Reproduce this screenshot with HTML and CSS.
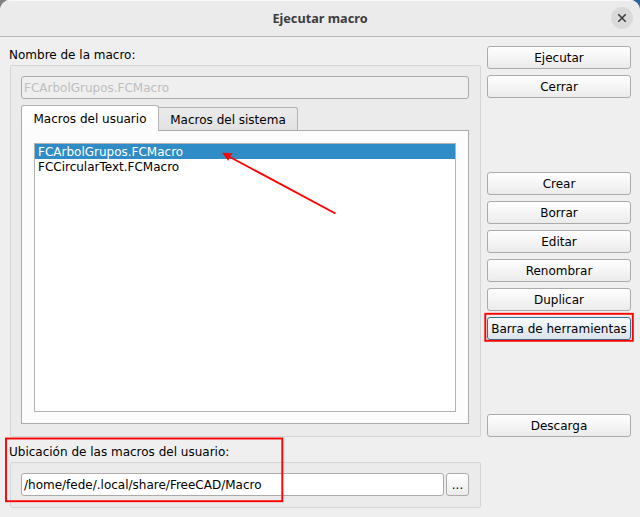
FILE: index.html
```
<!DOCTYPE html>
<html lang="es">
<head>
<meta charset="utf-8">
<title>Ejecutar macro</title>
<link rel="stylesheet" href="styles.css">
</head>
<body>
<div class="dialog">
  <header class="titlebar">
    <h1 class="title">Ejecutar macro</h1>
    <button class="close" aria-label="Cerrar ventana"><svg width="22" height="22" viewBox="0 0 22 22"><path d="M7.3 7.3l7.4 7.4M14.7 7.3l-7.4 7.4"/></svg></button>
  </header>
  <main class="content">
    <section class="left">
      <div class="label">Nombre de la macro:</div>
      <div class="group macros">
        <div class="field disabled">FCArbolGrupos.FCMacro</div>
        <div class="tabs">
          <div class="tab active">Macros del usuario</div>
          <div class="tab">Macros del sistema</div>
        </div>
        <div class="pane">
          <div class="list">
            <div class="item selected">FCArbolGrupos.FCMacro</div>
            <div class="item">FCCircularText.FCMacro</div>
          </div>
        </div>
      </div>
      <div class="label location-label">Ubicación de las macros del usuario:</div>
      <div class="group location">
        <div class="field">/home/fede/.local/share/FreeCAD/Macro</div>
        <button class="btn browse">...</button>
      </div>
    </section>
    <aside class="actions">
      <button class="btn">Ejecutar</button>
      <button class="btn">Cerrar</button>
      <button class="btn edit-start">Crear</button>
      <button class="btn">Borrar</button>
      <button class="btn">Editar</button>
      <button class="btn">Renombrar</button>
      <button class="btn">Duplicar</button>
      <button class="btn hover">Barra de herramientas</button>
      <button class="btn download">Descarga</button>
    </aside>
  </main>
</div>
<svg class="marks" width="640" height="517" viewBox="0 0 640 517">
  <rect x="6" y="438.5" width="276.3" height="62.7"/>
  <rect x="485.3" y="313.8" width="147.5" height="27"/>
  <path d="M335.5 213.5L228 156"/>
  <path class="head" d="M222.7 153L232.3 153.5L229.5 156.5L228.2 160.4Z"/>
</svg>
</body>
</html>
```
FILE: styles.css
```
* { box-sizing: border-box; }
body {
  margin: 0;
  width: 640px;
  height: 517px;
  overflow: hidden;
  position: relative;
  background: linear-gradient(90deg, #818181 50%, #2c6499 50%);
  font: 12px/15px "DejaVu Sans", sans-serif;
  color: #000;
}
.dialog {
  height: 517px;
  background: #efefef;
  border-radius: 10px 10px 0 0;
  overflow: hidden;
}
.titlebar {
  height: 37px;
  display: grid;
  grid-template-columns: 1fr auto 1fr;
  align-items: center;
  background: #ebebeb;
  border-top: 1px solid #f9f9f9;
  border-bottom: 1px solid #b9b9b9;
  padding: 0 7px 1px;
}
.title {
  grid-column: 2;
  margin: 0;
  padding-bottom: 1px;
  font: bold 12.7px/18px "Noto Sans", sans-serif;
  color: #3d3d3d;
}
.close {
  justify-self: end;
  width: 22px;
  height: 22px;
  padding: 0;
  border: 0;
  border-radius: 50%;
  background: #dadada;
}
.close svg { display: block; stroke: #3d3d3d; stroke-width: 1.6; }
.content {
  display: flex;
  gap: 6px;
  padding: 9px;
}
.left { width: 472px; }
.label { height: 19px; line-height: 18px; }
.group {
  margin-left: 1px;
  border: 1px solid #d5d5d5;
  border-radius: 2px;
  background: #ebebeb;
  padding: 10px 11px 10px 10px;
}
.macros { height: 372px; }
.field {
  height: 23px;
  border: 1px solid #ababab;
  border-radius: 3px;
  background: #fff;
  padding: 4px 2px 0;
  white-space: nowrap;
}
.disabled { background: #efefef; color: #bebebe; }
.tabs {
  display: flex;
  align-items: flex-end;
  height: 25px;
  margin-top: 6px;
}
.tab {
  height: 23px;
  width: 139px;
  border: 1px solid #b3b3b3;
  border-left: 0;
  border-bottom: 0;
  border-radius: 0 3px 0 0;
  background: linear-gradient(#ebebeb, #e2e2e2);
  text-align: center;
  line-height: 24px;
  white-space: nowrap;
}
.active {
  position: relative;
  height: 26px;
  width: 138px;
  margin-bottom: -1px;
  border-left: 1px solid #ababab;
  border-radius: 3px 3px 0 0;
  background: linear-gradient(#fff, #fcfcfc);
  line-height: 26px;
}
.pane {
  height: 294px;
  border: 1px solid #ababab;
  background: #fcfcfc;
  padding: 12px;
}
.list {
  height: 269px;
  border: 1px solid #b3b3b3;
  background: #fff;
}
.item { height: 15px; padding-left: 3px; line-height: 16px; }
.selected { background: #308cc6; color: #fff; }
.location-label { margin-top: 6px; }
.location { display: flex; gap: 2px; height: 46px; }
.location .field { flex: 1; }
.btn {
  display: block;
  width: 144px;
  height: 23px;
  padding: 2px 0 0;
  border: 1px solid #ababab;
  border-radius: 3px;
  background: linear-gradient(#fff, #ebebeb);
  font: inherit;
  color: inherit;
  white-space: nowrap;
}
.browse { width: 23px; }
.actions { display: flex; flex-direction: column; gap: 6px; }
.edit-start { margin-top: 68px; }
.hover { border-color: #30709c; background: linear-gradient(#fafbfc, #dae3ea); }
.download { margin-top: 68px; }
.marks {
  position: absolute;
  inset: 0;
  fill: none;
  stroke: #ff0000;
  stroke-width: 1.9;
}
.head { fill: #ff0000; stroke-width: .5; }
```
